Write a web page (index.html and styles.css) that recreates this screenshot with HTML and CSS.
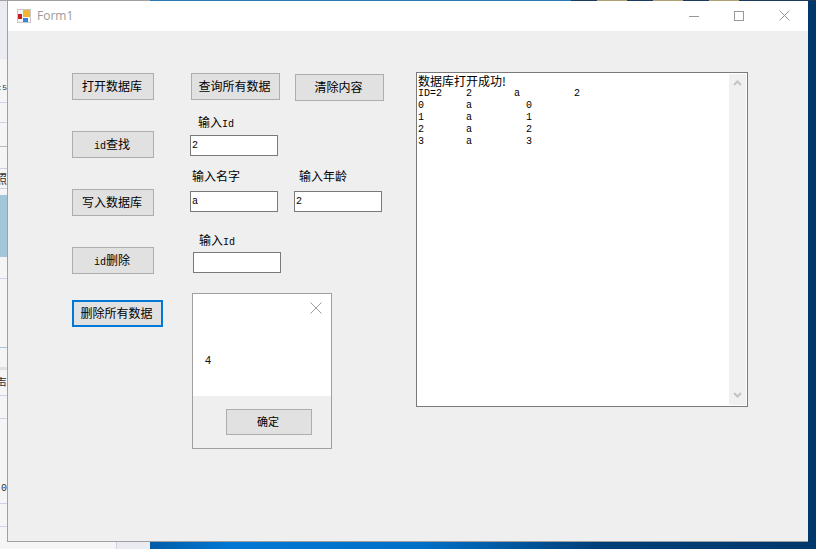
FILE: index.html
```html
<!DOCTYPE html>
<html lang="en">
<head>
    <meta charset="UTF-8">
    <title>Form1</title>
    <link rel="stylesheet" href="styles.css">
</head>
<body>
    <div class="top-edge">
        <span class="edge-grey"></span><span class="edge-blue"></span><span class="edge-dark"></span><span class="edge-tan"></span><span class="edge-dark"></span><span class="edge-tan"></span><span class="edge-dark"></span><span class="edge-tan"></span><span class="edge-dark"></span>
    </div>

    <!-- app lying behind the form, only its left edge and foot are visible -->
    <div class="behind">
        <div class="row r1"></div>
        <div class="row r2"><span class="clip clip-time">2:5</span></div>
        <div class="row r3"></div>
        <div class="row r4"></div>
        <div class="row r5"></div>
        <div class="row r6"><span class="clip cjk">照</span></div>
        <div class="row sel"></div>
        <div class="row r7"></div>
        <div class="row r8"></div>
        <div class="row r9"></div>
        <div class="row r10"><span class="clip cjk">声</span></div>
        <div class="row r11"></div>
        <div class="row r12"><span class="clip">0</span></div>
        <div class="row r13"></div>
        <div class="foot"><span class="foot-a"></span><span class="foot-b"></span></div>
    </div>

    <div class="window">
        <div class="titlebar">
            <svg class="app-icon" width="14" height="14" viewBox="0 0 14 14">
                <rect x="0" y="0" width="14" height="14" fill="#c8c8c8"/>
                <rect x="1" y="1" width="12" height="12" fill="#f4f4f4"/>
                <rect x="1" y="5" width="4" height="5" fill="#c81e1e"/>
                <rect x="6" y="1" width="7" height="7" fill="#f2b632"/>
                <rect x="6" y="9" width="5" height="4" fill="#3c82dc"/>
            </svg>
            <span class="title">Form1</span>
            <div class="controls">
                <svg width="10" height="10" viewBox="0 0 10 10"><path d="M0 5.5H10" stroke="#999" fill="none"/></svg>
                <svg width="10" height="10" viewBox="0 0 10 10"><rect x="0.5" y="0.5" width="9" height="9" stroke="#999" fill="none"/></svg>
                <svg width="11" height="11" viewBox="0 0 11 11"><path d="M0.5 0.5L10.5 10.5M10.5 0.5L0.5 10.5" stroke="#999" fill="none"/></svg>
            </div>
        </div>

        <div class="form">
            <div class="col-left">
                <button class="btn">打开数据库</button>
                <button class="btn"><span class="lat">id</span>查找</button>
                <button class="btn">写入数据库</button>
                <button class="btn"><span class="lat">id</span>删除</button>
                <button class="btn btn-focus">删除所有数据</button>
            </div>

            <div class="col-mid">
                <div class="top-btns">
                    <button class="btn btn-wide">查询所有数据</button>
                    <button class="btn btn-wide btn-low">清除内容</button>
                </div>

                <label class="label label-id">输入<span class="lat">Id</span></label>
                <input class="field field-id" type="text" value="2">

                <div class="pair-labels">
                    <label class="label">输入名字</label>
                    <label class="label">输入年龄</label>
                </div>
                <div class="pair-fields">
                    <input class="field" type="text" value="a">
                    <input class="field" type="text" value="2">
                </div>

                <label class="label label-del">输入<span class="lat">Id</span></label>
                <input class="field field-del" type="text">

                <div class="dialog">
                    <div class="dialog-body">
                        <svg class="dialog-x" width="12" height="12" viewBox="0 0 12 12"><path d="M0.5 0.5L11.5 11.5M11.5 0.5L0.5 11.5" stroke="#a0a0a0" fill="none"/></svg>
                        <p class="dialog-msg">4</p>
                    </div>
                    <div class="dialog-foot">
                        <button class="btn btn-ok">确定</button>
                    </div>
                </div>
            </div>

            <div class="log">
<pre class="log-text"><span class="cjk-line">数据库打开成功!</span>ID=2    2       a         2
0       a         0
1       a         1
2       a         2
3       a         3</pre>
                <div class="scroll">
                    <svg width="9" height="6" viewBox="0 0 9 6"><path d="M1 5L4.5 1.5L8 5" stroke="#c4c4c4" stroke-width="2" fill="none"/></svg>
                    <svg width="9" height="6" viewBox="0 0 9 6"><path d="M1 1L4.5 4.5L8 1" stroke="#c4c4c4" stroke-width="2" fill="none"/></svg>
                </div>
            </div>
        </div>
    </div>
</body>
</html>
```

FILE: styles.css
```css
body{
    margin: 0;
    width: 816px;
    height: 549px;
    overflow: hidden;
    position: relative;
    background: linear-gradient(90deg, #005ca8 150px, #0078d4 230px, #0070c8 420px, #003f78 600px, #00386c 816px);
    font-family: "Noto Sans CJK SC", sans-serif;
    font-size: 12px;
    color: #000;
}
.top-edge{
    display: flex;
    height: 1px;
}
.edge-grey{ width: 150px; background: #a0a0a0; }
.edge-blue{ width: 421px; background: #2a78b4; }
.edge-dark{ width: 26px; background: #1c3a5c; }
.edge-tan{ width: 30px; background: #b0a078; }
.top-edge .edge-dark:last-child{ flex: 1; }

/* app behind the form */
.behind{
    width: 150px;
    height: 548px;
    display: flex;
    flex-direction: column;
    background: #f5f5f5;
}
.row{
    flex: none;
    box-sizing: border-box;
    border-bottom: 1px solid #d2d0e4;
    display: flex;
    align-items: center;
}
.r1{ height: 58px; background: #ebebf2; border-bottom: none; }
.r2{ height: 44px; padding-top: 14px; }
.r3{ height: 20px; }
.r4{ height: 24px; border-bottom-color: #b8b8c0; }
.r5{ height: 22px; }
.r6{ height: 20px; }
.sel{ height: 69px; background: linear-gradient(180deg, #f5f5f5 6px, #a3c6da 6px, #a3c6da 68px, #f5f5f5 68px); border-bottom: none; }
.r7{ height: 21px; }
.r8{ height: 69px; border-bottom-color: #a3c6da; }
.r9{ height: 22px; border-bottom: 3px solid #e0e0e0; }
.r10{ height: 26px; }
.r11{ height: 23px; }
.r12{ height: 85px; padding-top: 54px; }
.r13{ height: 23px; }
.clip{
    width: 7px;
    overflow: hidden;
    direction: rtl;
    font-family: "Liberation Mono", monospace;
    font-size: 10px;
    color: #333;
    white-space: nowrap;
}
.clip-time{
    font-size: 8px;
}
.clip.cjk{
    font-family: "Noto Sans CJK SC", sans-serif;
    font-size: 12px;
}
.foot{
    flex: 1;
    display: flex;
}
.foot-a{ width: 116px; border-right: 1px solid #d2d0e4; }
.foot-b{ flex: 1; background: #ebebf2; }

/* the form window */
.window{
    position: absolute;
    left: 7px;
    top: 1px;
    width: 801px;
    height: 541px;
    box-sizing: border-box;
    border-left: 1px solid #a0a0a0;
    border-bottom: 1px solid #a0a0a0;
    background: #efefef;
    display: flex;
    flex-direction: column;
}
.titlebar{
    height: 30px;
    flex: none;
    background: #fff;
    display: flex;
    align-items: center;
    padding-left: 9px;
}
.app-icon{
    margin-top: -1px;
}
.title{
    margin: -2px 0 0 6px;
    font-family: "Open Sans", sans-serif;
    font-size: 12px;
    color: #9a9a9a;
}
.controls{
    margin-left: auto;
    display: flex;
    align-items: center;
    gap: 35px;
    padding-right: 18px;
    margin-top: -1px;
}
.form{
    flex: 1;
    display: flex;
    align-items: flex-start;
}
.col-left{
    margin: 42px 0 0 64px;
    width: 118px;
    flex: none;
    display: flex;
    flex-direction: column;
    align-items: flex-start;
}
.btn{
    width: 82px;
    height: 27px;
    margin-bottom: 31px;
    padding: 0 2px 2px 0;
    box-sizing: border-box;
    border: 1px solid #adadad;
    background: #e1e1e1;
    font-family: "Noto Sans CJK SC", sans-serif;
    font-size: 12px;
    color: #000;
}
.btn:nth-child(4){
    margin-bottom: 26px;
}
.btn-focus{
    width: 91px;
    border: 2px solid #0078d7;
}
.lat{
    font-family: "Liberation Mono", monospace;
    font-size: 10px;
}
.col-mid{
    width: 226px;
    flex: none;
    margin-top: 42px;
    display: flex;
    flex-direction: column;
    align-items: flex-start;
}
.top-btns{
    display: flex;
    gap: 15px;
    margin-left: 1px;
    height: 28px;
}
.btn-wide{
    width: 89px;
    margin: 0;
}
.btn-low{
    margin-top: 1px;
}
.label{
    display: block;
    height: 12px;
    line-height: 12px;
    white-space: nowrap;
}
.label-id{
    margin: 15px 0 1px 8px;
}
.field{
    width: 88px;
    height: 21px;
    padding: 0 1px;
    box-sizing: border-box;
    border: 1px solid #7a7a7a;
    border-radius: 0;
    outline: none;
    background: #fff;
    font-family: "Liberation Mono", monospace;
    font-size: 10px;
    color: #000;
}
.field-id{
    margin-top: 6px;
}
.pair-labels{
    display: flex;
    gap: 59px;
    margin: 14px 0 0 2px;
}
.pair-fields{
    display: flex;
    gap: 16px;
    margin-top: 9px;
}
.label-del{
    margin: 22px 0 1px 9px;
}
.field-del{
    margin: 5px 0 0 3px;
}
.dialog{
    margin: 20px 0 0 2px;
    width: 140px;
    height: 156px;
    box-sizing: border-box;
    border: 1px solid #a0a0a0;
    display: flex;
    flex-direction: column;
}
.dialog-body{
    height: 102px;
    background: #fff;
    position: relative;
    display: flex;
    align-items: center;
    padding: 29px 0 0 12px;
    box-sizing: border-box;
}
.dialog-x{
    position: absolute;
    right: 9px;
    top: 8px;
}
.dialog-msg{
    margin: 0;
    font-family: "Liberation Sans", sans-serif;
    font-size: 11px;
    color: #111;
}
.dialog-foot{
    flex: 1;
    padding: 13px 0 0 33px;
}
.btn-ok{
    width: 86px;
    height: 26px;
    margin: 0;
    font-size: 11px;
}
.log{
    margin-top: 41px;
    width: 332px;
    height: 335px;
    flex: none;
    box-sizing: border-box;
    border: 1px solid #7a7a7a;
    background: #fff;
    display: flex;
    justify-content: space-between;
}
.log-text{
    margin: 2px 0 0 1px;
    font-family: "Liberation Mono", monospace;
    font-size: 10px;
    line-height: 12px;
}
.cjk-line{
    display: block;
    height: 13px;
    font-family: "Noto Sans CJK SC", sans-serif;
    font-size: 12px;
    line-height: 12px;
}
.scroll{
    width: 17px;
    margin: 1px 1px 1px 0;
    background: #f0f0f0;
    display: flex;
    flex-direction: column;
    justify-content: space-between;
    align-items: center;
    padding: 6px 0 7px;
    box-sizing: border-box;
}
```
